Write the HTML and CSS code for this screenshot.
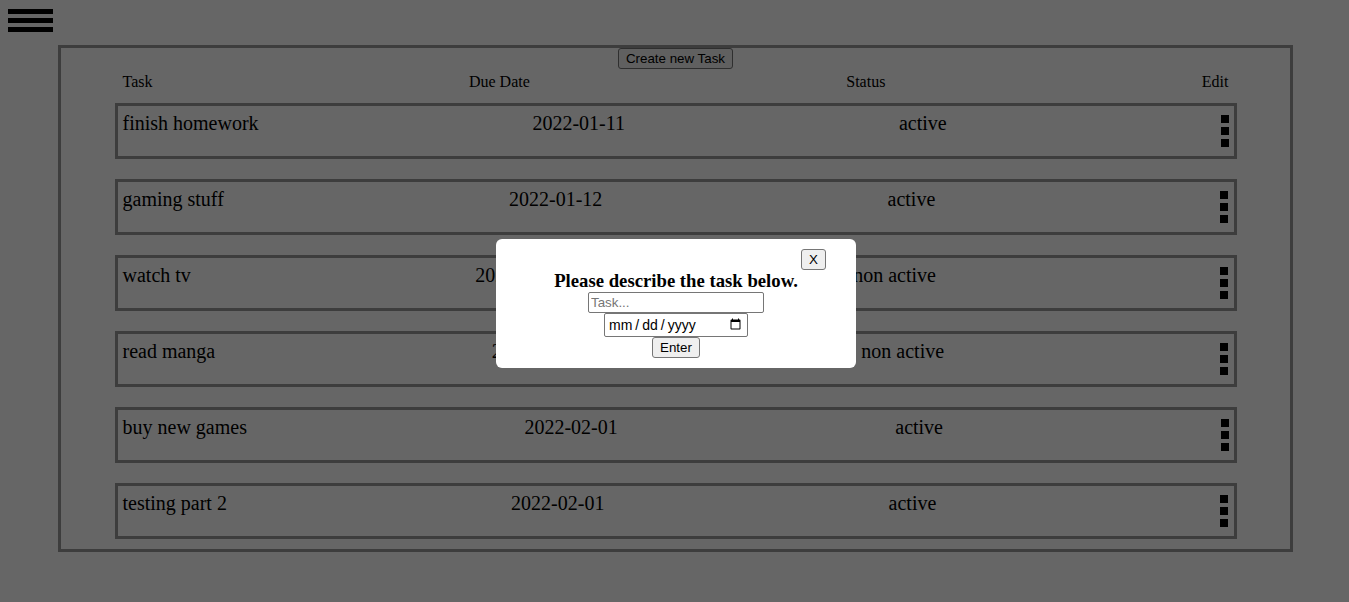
FILE: index.html
```html
<!DOCTYPE html>
<html lang="en">
<head>
<meta charset="utf-8">
<title>Tasks</title>
<link rel="stylesheet" href="styles.css">
</head>
<body>
<div class="hamburger">
  <div class="bar"></div>
  <div class="bar"></div>
  <div class="bar"></div>
</div>

<div class="board">
  <button class="btn create-btn">Create new Task</button>
  <div class="head-row">
    <span>Task</span>
    <span>Due Date</span>
    <span>Status</span>
    <span>Edit</span>
  </div>

  <div class="task-row">
    <span class="cell">finish homework</span>
    <span class="cell">2022-01-11</span>
    <span class="cell">active</span>
    <div class="dots"><i></i><i></i><i></i></div>
  </div>
  <div class="task-row">
    <span class="cell">gaming stuff</span>
    <span class="cell">2022-01-12</span>
    <span class="cell">active</span>
    <div class="dots"><i></i><i></i><i></i></div>
  </div>
  <div class="task-row">
    <span class="cell">watch tv</span>
    <span class="cell">2022-01-20</span>
    <span class="cell">non active</span>
    <div class="dots"><i></i><i></i><i></i></div>
  </div>
  <div class="task-row">
    <span class="cell">read manga</span>
    <span class="cell">2022-01-25</span>
    <span class="cell">non active</span>
    <div class="dots"><i></i><i></i><i></i></div>
  </div>
  <div class="task-row">
    <span class="cell">buy new games</span>
    <span class="cell">2022-02-01</span>
    <span class="cell">active</span>
    <div class="dots"><i></i><i></i><i></i></div>
  </div>
  <div class="task-row">
    <span class="cell">testing part 2</span>
    <span class="cell">2022-02-01</span>
    <span class="cell">active</span>
    <div class="dots"><i></i><i></i><i></i></div>
  </div>
</div>

<div class="overlay"></div>

<div class="modal">
  <div class="modal-top">
    <button class="btn close-btn">X</button>
  </div>
  <h3 class="modal-title">Please describe the task below.</h3>
  <input class="field task-field" type="text" placeholder="Task...">
  <input class="field date-field" type="date">
  <button class="btn enter-btn">Enter</button>
</div>
</body>
</html>
```

FILE: styles.css
```css
html, body {
  background: #ffffff;
}
body {
  margin: 8px;
  font-family: "Liberation Serif", "Times New Roman", serif;
  color: #000;
}

.hamburger {
  padding-top: 1px;
  width: 45px;
}
.bar {
  width: 45px;
  height: 5px;
  background: #000;
  margin-bottom: 4px;
}
.bar:last-child {
  margin-bottom: 0;
}

.board {
  margin: 13px 0 0 50px;
  width: 1229px;
  border: 3px solid #999;
  padding: 0 0 10px 0;
}

.btn {
  font-family: "Liberation Sans", Arial, sans-serif;
  font-size: 13.333px;
  line-height: 15px;
  color: #000;
  background: #efefef;
  border: 1px solid #767676;
  border-radius: 3px;
  padding: 2px 7px;
  height: 21px;
  box-sizing: border-box;
}

.create-btn {
  display: block;
  margin: 0 auto;
}

.head-row {
  width: 1106px;
  margin: 4px auto 12px;
  padding: 0 8px;
  display: flex;
  justify-content: space-between;
  font-size: 16px;
  line-height: 18px;
}

.task-row {
  width: 1106px;
  margin: 0 auto 20px;
  padding: 5px;
  border: 3px solid #999;
  display: flex;
  justify-content: space-between;
  align-items: flex-start;
  font-size: 20px;
  line-height: 23px;
}
.task-row:last-child {
  margin-bottom: 0;
}
.cell {
  padding-top: 1px;
}

.dots {
  height: 40px;
  display: flex;
  flex-direction: column;
  justify-content: center;
  gap: 4px;
}
.dots i {
  display: block;
  width: 8px;
  height: 8px;
  background: #000;
}

.overlay {
  position: fixed;
  inset: 0;
  background: rgba(0, 0, 0, 0.6);
}

.modal {
  position: fixed;
  left: 496px;
  top: 239px;
  width: 360px;
  height: 129px;
  box-sizing: border-box;
  padding: 10px;
  background: #fff;
  border-radius: 6px;
  text-align: center;
}
.modal-top {
  display: flex;
  justify-content: flex-end;
  padding-right: 20px;
}
.modal-title {
  margin: 0;
  padding-top: 1px;
  font-size: 18.72px;
  font-weight: bold;
  line-height: 20.5px;
}

.field {
  display: block;
  margin: 0 auto;
  box-sizing: border-box;
  font-family: "Liberation Sans", Arial, sans-serif;
  font-size: 13.333px;
  border: 1px solid #767676;
  border-radius: 2px;
  background: #fff;
  color: #000;
}
.task-field {
  width: 176px;
  height: 21px;
  padding: 1px 2px;
}
.task-field::placeholder {
  color: #757575;
}
.date-field {
  width: 144px;
  height: 24px;
  padding: 1px 3px;
  font-size: 14px;
}
.date-field::-webkit-datetime-edit-text {
  padding: 0 2px;
}
.date-field::-webkit-calendar-picker-indicator {
  width: 13px;
  height: 13px;
  padding: 0;
  margin: 0 2px 0 0;
}
.enter-btn {
  display: block;
  margin: 0 auto;
}
```
